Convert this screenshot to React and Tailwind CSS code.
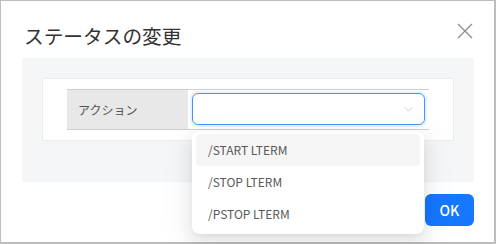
import React from "react";

const options = ["/START LTERM", "/STOP LTERM", "/PSTOP LTERM"];

export default function App() {
  return (
    <div
      className="w-[496px] h-[244px] bg-white border-l border-t border-r-2 border-b-2 border-[#bdbdbd] flex flex-col"
      style={{ fontFamily: '"Noto Sans CJK JP", "Noto Sans", sans-serif' }}
    >
      <div className="flex items-start justify-between pl-[23px] pr-[21px] pt-[21px]">
        <h1 className="text-[19.7px] leading-[28px] text-[#333]">ステータスの変更</h1>
        <button className="mt-[1px] w-[16px] h-[16px] text-[#8c8c8c]">
          <svg viewBox="0 0 16 16" width="16" height="16" fill="none" stroke="currentColor" strokeWidth="1.3">
            <path d="M1 1L15 15M15 1L1 15" />
          </svg>
        </button>
      </div>

      <div className="mt-[8px] ml-[21px] mr-[20px] h-[124px] bg-[#f5f6f8] px-[20px] pt-[20px]">
        <div className="h-[63px] bg-white border border-[#ececec] px-[24px] pt-[10px]">
          <div className="flex h-[41px] border-t border-b border-[#cfcfcf]">
            <div className="w-[121px] bg-[#e8e8e8] flex items-center pl-[11px] text-[12px] text-[#555]">
              アクション
            </div>
            <div className="flex-1 px-[4px] pt-[3px]">
              <div className="relative">
                <div className="h-[32px] rounded-[6px] border border-[#4096ff] ring-2 ring-[#0591ff]/10 flex items-center justify-end pr-[11px]">
                  <svg viewBox="0 0 10 6" width="9" height="5" fill="none" stroke="#bfbfbf" strokeWidth="1">
                    <path d="M0.5 0.5L5 5L9.5 0.5" />
                  </svg>
                </div>
                <div className="absolute left-0 top-[38px] w-[232px] z-10 bg-white rounded-[8px] shadow-[0_6px_16px_0_rgba(0,0,0,0.08),0_3px_6px_-4px_rgba(0,0,0,0.12),0_9px_28px_8px_rgba(0,0,0,0.05)] px-[4px] pt-[3px] pb-[4px]">
                  {options.map((o, i) => (
                    <div
                      key={o}
                      className={
                        "h-[32px] flex items-center px-[12px] rounded-[4px] text-[12px] text-[#595959] " +
                        (i === 0 ? "bg-[#f5f5f5]" : "")
                      }
                    >
                      {o}
                    </div>
                  ))}
                </div>
              </div>
            </div>
          </div>
        </div>
      </div>

      <div className="flex justify-end mt-[12px] mr-[20px]">
        <button className="w-[49px] h-[32px] rounded-[6px] bg-[#1677ff] text-white text-[14px] font-medium">
          OK
        </button>
      </div>
    </div>
  );
}
